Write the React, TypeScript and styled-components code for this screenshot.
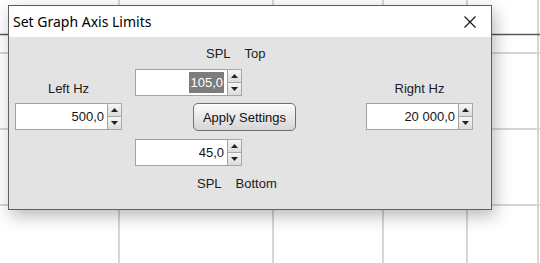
import React from 'react';
import styled, { createGlobalStyle } from 'styled-components';

const GlobalStyle = createGlobalStyle`
  html, body {
    margin: 0;
    padding: 0;
    background: #ffffff;
  }
  body {
    width: 540px;
    height: 263px;
    overflow: hidden;
    font-family: "Liberation Sans", Arial, sans-serif;
  }
`;

const Stage = styled.div`
  position: relative;
  width: 540px;
  height: 263px;
  background: #ffffff;
  overflow: hidden;
`;

const ChartGrid = styled.svg`
  display: block;
`;

// the dialog floats over the chart like a desktop window
const Dialog = styled.div`
  position: absolute;
  left: 8px;
  top: 5px;
  width: 482px;
  border: 1px solid #5e5e5e;
  background: #e3e3e3;
  box-shadow: 3px 6px 16px rgba(0, 0, 0, 0.28);
`;

const TitleBar = styled.div`
  height: 31px;
  background: #ffffff;
  display: flex;
  align-items: center;
  justify-content: space-between;
  padding: 0 15px 0 4px;
`;

const Title = styled.span`
  font-family: "Noto Sans", "Open Sans", sans-serif;
  font-size: 14px;
  color: #000000;
`;

const CloseIcon = styled.svg`
  display: block;
`;

const Content = styled.div`
  display: grid;
  grid-template-columns: 107px 1fr 107px;
  grid-template-rows: 17px 27px 29px 27px 20px;
  grid-template-areas:
    ". toplabel ."
    "leftlabel topspin rightlabel"
    "leftspin apply rightspin"
    ". bottomspin ."
    ". bottomlabel .";
  row-gap: 7px;
  padding: 8px 18px 16px 6px;
`;

const Cell = styled.div<{ $area: string; $indent?: number; $align?: string; $justify?: string }>`
  grid-area: ${({ $area }) => $area};
  margin-left: ${({ $indent }) => $indent ?? 0}px;
  align-self: ${({ $align }) => $align ?? 'stretch'};
  justify-self: ${({ $justify }) => $justify ?? 'start'};
  display: flex;
`;

const Label = styled.span`
  font-size: 13px;
  line-height: 15px;
  color: #1c1c1c;
  display: flex;
  gap: 14px;
`;

const SpinBox = styled.div`
  width: 107px;
  height: 27px;
  display: flex;
`;

const SpinField = styled.div`
  flex: 1;
  border: 1px solid #a2a2a2;
  background: #ffffff;
  display: flex;
  align-items: center;
  justify-content: flex-end;
  padding-right: 3px;
  font-size: 13px;
  color: #141414;
`;

const Selected = styled.span`
  background: #7c7c7c;
  color: #ffffff;
  line-height: 21px;
  padding: 0 1px;
`;

const SpinArrows = styled.div`
  width: 14px;
  display: flex;
  flex-direction: column;
`;

const ArrowButton = styled.div<{ $down?: boolean }>`
  flex: 1;
  border: 1px solid #a8a8a8;
  border-top-width: ${({ $down }) => ($down ? 0 : 1)}px;
  border-left-width: 0;
  background: linear-gradient(#f6f6f6, #dcdcdc);
  display: flex;
  align-items: center;
  justify-content: center;
`;

const ApplyButton = styled.button`
  width: 103px;
  height: 28px;
  border: 1px solid #6f6f6f;
  border-radius: 5px;
  background: linear-gradient(#fbfbfb, #e6e6e6 55%, #d6d6d6);
  box-shadow: inset 0 1px 0 #ffffff;
  font-family: "Liberation Sans", Arial, sans-serif;
  font-size: 13px;
  color: #111111;
  padding: 0;
  cursor: pointer;
`;

const Triangle: React.FC<{ down?: boolean }> = ({ down }) => (
  <svg width="7" height="4" viewBox="0 0 7 4">
    <polygon points={down ? '0,0 7,0 3.5,4' : '0,4 7,4 3.5,0'} fill="#222" />
  </svg>
);

const Spinner: React.FC<{ value: string; selected?: boolean }> = ({ value, selected }) => (
  <SpinBox>
    <SpinField>{selected ? <Selected>{value}</Selected> : value}</SpinField>
    <SpinArrows>
      <ArrowButton>
        <Triangle />
      </ArrowButton>
      <ArrowButton $down>
        <Triangle down />
      </ArrowButton>
    </SpinArrows>
  </SpinBox>
);

const verticals = [119, 273, 383, 467, 538];
const horizontals = [53, 129, 205];

export default function App() {
  return (
    <>
      <GlobalStyle />
      <Stage>
        <ChartGrid width="540" height="263">
          {verticals.map((x) => (
            <line key={x} x1={x} y1={0} x2={x} y2={263} stroke="#d6d6d6" strokeWidth="2" />
          ))}
          {horizontals.map((y) => (
            <line key={y} x1={0} y1={y} x2={540} y2={y} stroke="#d6d6d6" strokeWidth="2" />
          ))}
          <line x1={0} y1={34.5} x2={540} y2={34.5} stroke="#585858" strokeWidth="1.5" />
        </ChartGrid>

        <Dialog>
          <TitleBar>
            <Title>Set Graph Axis Limits</Title>
            <CloseIcon width="12" height="12" viewBox="0 0 12 12">
              <path d="M0.5 0.5 L11.5 11.5 M11.5 0.5 L0.5 11.5" stroke="#111" strokeWidth="1.1" />
            </CloseIcon>
          </TitleBar>

          <Content>
            <Cell $area="toplabel" $indent={84} $align="center">
              <Label>
                <span>SPL</span>
                <span>Top</span>
              </Label>
            </Cell>
            <Cell $area="topspin" $indent={13}>
              <Spinner value="105,0" selected />
            </Cell>

            <Cell $area="leftlabel" $align="end" $justify="center">
              <Label>Left Hz</Label>
            </Cell>
            <Cell $area="rightlabel" $align="end" $justify="center">
              <Label>Right Hz</Label>
            </Cell>

            <Cell $area="leftspin" $align="start">
              <Spinner value="500,0" />
            </Cell>
            <Cell $area="apply" $indent={71} $align="start">
              <ApplyButton>Apply Settings</ApplyButton>
            </Cell>
            <Cell $area="rightspin" $align="start">
              <Spinner value="20 000,0" />
            </Cell>

            <Cell $area="bottomspin" $indent={13}>
              <Spinner value="45,0" />
            </Cell>
            <Cell $area="bottomlabel" $indent={75} $align="center">
              <Label>
                <span>SPL</span>
                <span>Bottom</span>
              </Label>
            </Cell>
          </Content>
        </Dialog>
      </Stage>
    </>
  );
}
